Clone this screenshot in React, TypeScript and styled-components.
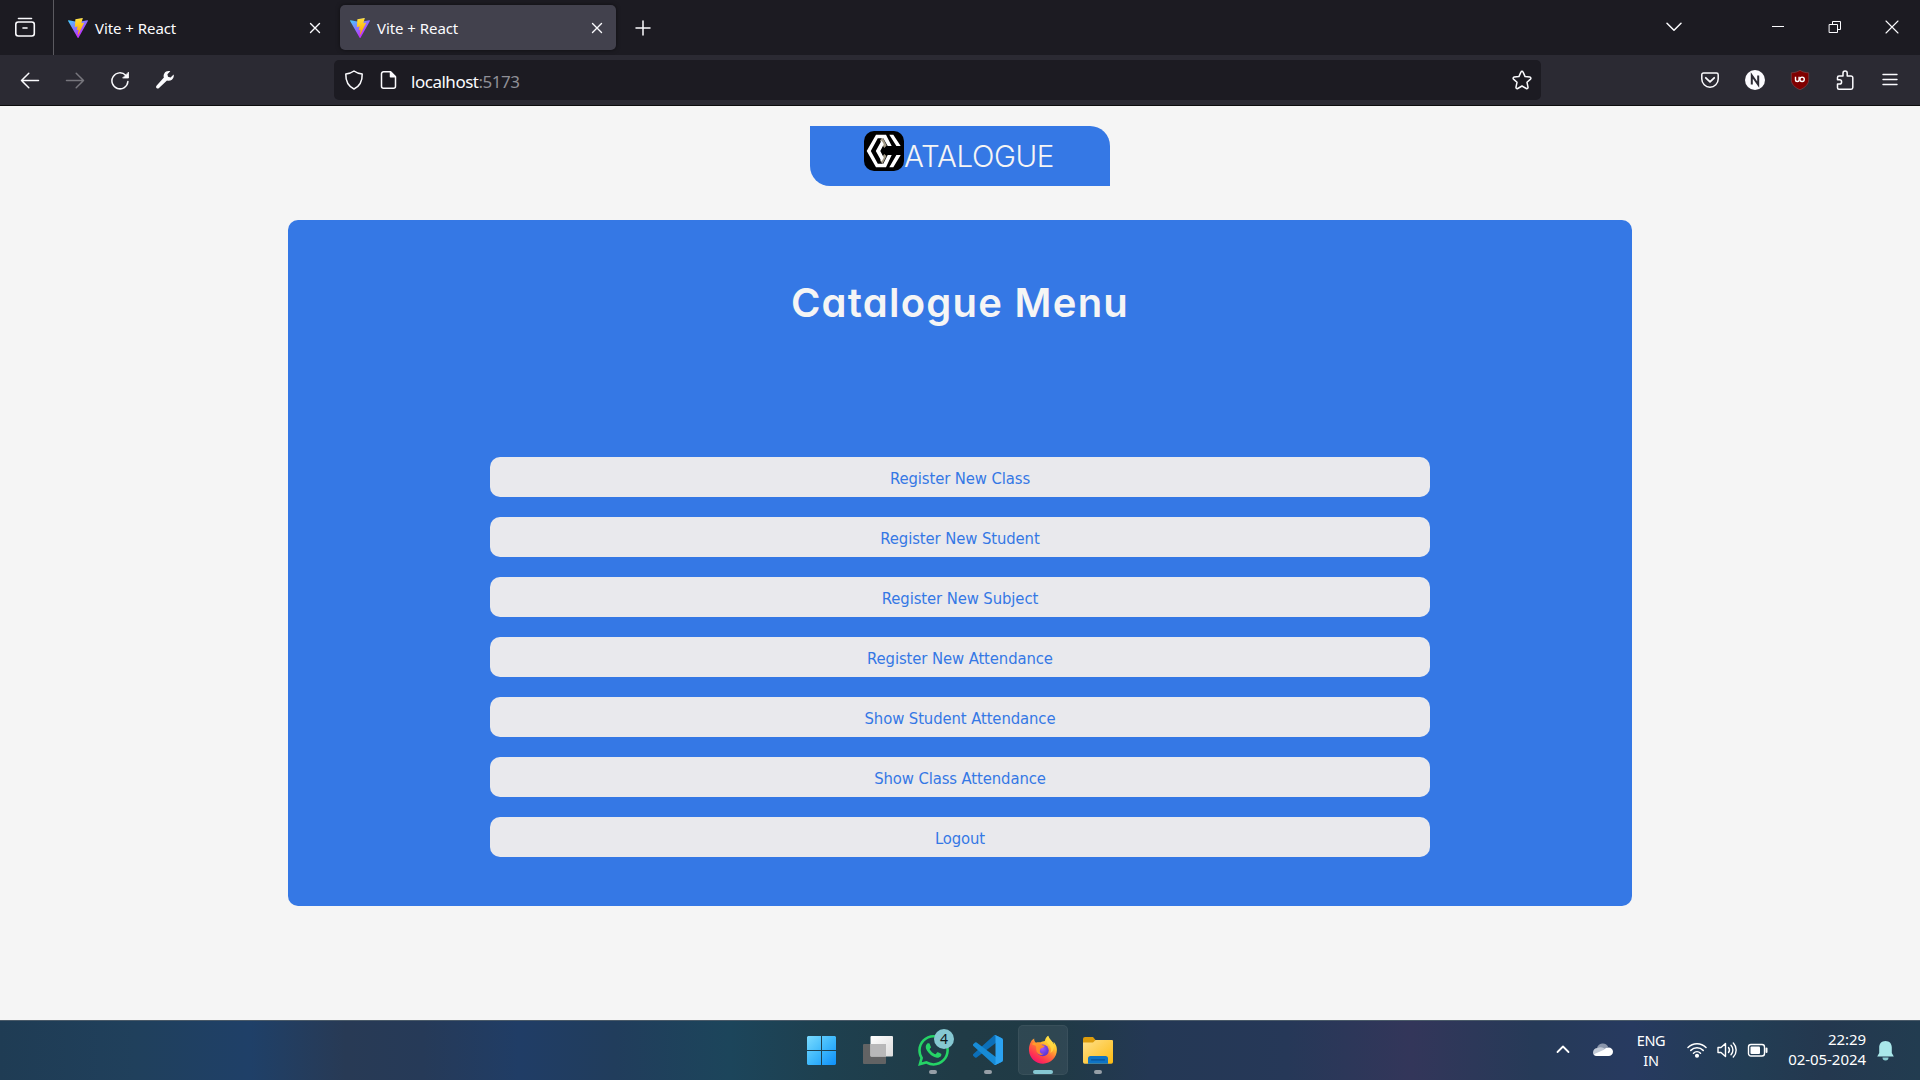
import React from 'react';
import styled, { createGlobalStyle } from 'styled-components';

const chromeFont = `'Noto Sans', 'Open Sans', sans-serif`;

const GlobalStyle = createGlobalStyle`
  * { box-sizing: border-box; }
  html, body { margin: 0; padding: 0; background: #f5f5f5; }
  svg { display: block; flex: none; }
`;

const Screen = styled.div`
  display: flex;
  flex-direction: column;
  width: 1920px;
  height: 1080px;
  overflow: hidden;
  font-family: ${chromeFont};
  color: #fbfbfe;
`;

/* ---------- browser chrome ---------- */

const TabStrip = styled.div`
  display: flex;
  height: 55px;
  background: #1c1b22;
  flex: none;
`;

const SidebarToggle = styled.div`
  width: 54px;
  padding: 17px 0 0 14px;
  border-right: 1px solid #5b5a60;
`;

const Tab = styled.div<{ $active?: boolean }>`
  display: flex;
  align-items: center;
  width: 276px;
  height: 45px;
  margin: 5px ${(p) => (p.$active ? 0 : 3)}px 0 ${(p) => (p.$active ? 3 : 4)}px;
  padding: 0 13px 0 10px;
  border-radius: 5px;
  background: ${(p) => (p.$active ? '#42414d' : 'transparent')};
  box-shadow: ${(p) => (p.$active ? '0 0 4px rgba(0,0,0,.5)' : 'none')};
`;

const Favicon = styled.div`
  width: 20px;
  height: 20px;
`;

const TabTitle = styled.span`
  flex: 1;
  margin-left: 7px;
  font-size: 15px;
  line-height: 20px;
  letter-spacing: -0.06px;
  padding-top: 1px;
`;

const NewTab = styled.div`
  padding: 20px 0 0 19px;
`;

const WindowControls = styled.div`
  display: flex;
  align-items: flex-start;
  margin-left: auto;
  padding: 20px 21px 0 0;
`;

const ControlSlot = styled.div<{ $gap: number }>`
  margin-right: ${(p) => p.$gap}px;
`;

const Toolbar = styled.div`
  display: flex;
  align-items: center;
  height: 51px;
  padding: 0 20px 0;
  background: #2b2a33;
  border-bottom: 1px solid #0c0c0d;
  flex: none;
`;

const NavButtons = styled.div`
  display: flex;
  gap: 25px;
  width: 314px;
`;

const UrlBar = styled.div`
  display: flex;
  align-items: center;
  width: 1207px;
  height: 40px;
  padding: 0 9px 0 10px;
  border-radius: 5px;
  background: #1c1b22;
`;

const PageInfo = styled.div`
  margin-left: 15px;
`;

const UrlText = styled.span`
  flex: 1;
  margin-left: 12px;
  font-size: 17px;
  line-height: 24px;
  padding-top: 3px;
  letter-spacing: -0.48px;
`;

const Port = styled.span`
  color: #8f8f96;
`;

const Extensions = styled.div`
  display: flex;
  gap: 25px;
  margin-left: auto;
`;

/* ---------- page ---------- */

const Page = styled.main`
  display: flex;
  flex-direction: column;
  align-items: center;
  flex: 1;
  padding-top: 20px;
  background: #f5f5f5;
`;

const Brand = styled.header`
  display: flex;
  width: 300px;
  height: 60px;
  padding: 5px 0 0 54px;
  border-radius: 0 20px 0 20px;
  background: #3578e5;
  color: #f5f5f5;
`;

const BrandName = styled.span`
  font-family: Inter, sans-serif;
  font-weight: 350;
  font-size: 29.5px;
  line-height: 40px;
  letter-spacing: -0.35px;
  margin: 5px 0 0 0;
  white-space: nowrap;
`;

const Panel = styled.section`
  display: flex;
  flex-direction: column;
  align-items: center;
  width: 1344px;
  height: 686px;
  margin-top: 34px;
  border-radius: 10px;
  background: #3578e5;
`;

const Title = styled.h1`
  margin: 59px 0 0;
  height: 178px;
  font-family: Inter, sans-serif;
  font-feature-settings: 'cv11';
  font-weight: 600;
  font-size: 40px;
  line-height: 48px;
  letter-spacing: 1.25px;
  color: #f5f5f5;
  white-space: nowrap;
`;

const Menu = styled.nav`
  display: flex;
  flex-direction: column;
  gap: 20px;
  width: 70%;
`;

const MenuButton = styled.button`
  height: 40px;
  padding: 2px 0 0;
  border: none;
  border-radius: 10px;
  background: #e9e9ed;
  color: #3578e5;
  font-family: 'DejaVu Sans Condensed', 'DejaVu Sans', sans-serif;
  font-stretch: condensed;
  font-size: 16.5px;
  letter-spacing: -0.1px;
`;

/* ---------- taskbar ---------- */

const Taskbar = styled.footer`
  display: flex;
  height: 60px;
  border-top: 1px solid #4a5a68;
  background: linear-gradient(90deg, #1f3c54 0%, #20405c 7%, #1f4068 13%, #283a55 18%, #263a58 22%, #203d66 27%, #213d5c 32%, #1c455b 38%, #1e404f 43%, #203b46 50%, #203a45 55%, #243855 60%, #263858 67%, #33365a 73.5%, #263a58 80%, #273a60 85%, #223d54 91%, #24384f 95%, #223c50 100%);
  flex: none;
`;

const Apps = styled.div`
  display: flex;
  gap: 5px;
  margin-left: 798px;
  padding-top: 4px;
`;

const AppSlot = styled.div<{ $active?: boolean }>`
  position: relative;
  display: flex;
  flex-direction: column;
  align-items: center;
  width: 50px;
  height: 50px;
  padding-top: 10px;
  border-radius: 5px;
  background: ${(p) => (p.$active ? 'rgba(255,255,255,.07)' : 'transparent')};
  box-shadow: ${(p) => (p.$active ? 'inset 0 0 0 1px rgba(255,255,255,.05)' : 'none')};
`;

const RunMark = styled.i<{ $active?: boolean }>`
  width: ${(p) => (p.$active ? 20 : 8)}px;
  height: 4px;
  margin-top: auto;
  margin-bottom: 1px;
  border-radius: 2px;
  background: ${(p) => (p.$active ? '#86c8d2' : '#969fa7')};
`;

const Badge = styled.span`
  position: absolute;
  left: 26px;
  top: 4px;
  width: 20px;
  height: 20px;
  border-radius: 50%;
  background: #86c8d2;
  color: #10181c;
  font-size: 14px;
  line-height: 20px;
  text-align: center;
`;

const Tray = styled.div`
  display: flex;
  align-items: flex-start;
  margin-left: auto;
  padding: 9px 26px 0 0;
  font-size: 14.5px;
  line-height: 20px;
  color: #fff;
`;

const TrayIcon = styled.div<{ $gap: number }>`
  margin: 10px ${(p) => p.$gap}px 0 0;
`;

const Language = styled.div`
  width: 30px;
  margin-right: 21px;
  display: flex;
  flex-direction: column;
  align-items: center;
  letter-spacing: -0.3px;
`;

const Clock = styled.div`
  width: 79px;
  margin: -1px 11px 0 0;
  text-align: right;
  white-space: nowrap;
  font-size: 15px;
  letter-spacing: -0.05px;
`;

/* ---------- icons ---------- */

type StrokeProps = { w: number; h?: number; s?: number; color?: string; children: React.ReactNode };
const Stroke = ({ w, h = w, s = 1.5, color = '#fbfbfe', children }: StrokeProps) => (
  <svg width={w} height={h} viewBox={`0 0 ${w} ${h}`} fill="none" stroke={color} strokeWidth={s} strokeLinecap="round" strokeLinejoin="round">
    {children}
  </svg>
);

const ViteIcon = ({ id }: { id: string }) => (
  <svg width="20" height="20" viewBox="0 0 256 257">
    <defs>
      <linearGradient id={`${id}a`} x1="0" x2=".58" y1="0" y2=".8"><stop stopColor="#41d1ff" /><stop offset="1" stopColor="#bd34fe" /></linearGradient>
      <linearGradient id={`${id}b`} x1=".43" x2=".5" y1=".02" y2=".9"><stop stopColor="#ffea83" /><stop offset=".08" stopColor="#ffdd35" /><stop offset="1" stopColor="#ffa800" /></linearGradient>
    </defs>
    <path fill={`url(#${id}a)`} d="M255.153 37.938L134.897 252.976c-2.483 4.44-8.862 4.466-11.382.048L.875 37.958c-2.746-4.814 1.371-10.646 6.827-9.67l120.385 21.517a6.537 6.537 0 0 0 2.322-.004l117.867-21.483c5.438-.991 9.574 4.796 6.877 9.62Z" />
    <path fill={`url(#${id}b)`} d="M185.432.063L96.44 17.501a3.268 3.268 0 0 0-2.634 3.014l-5.474 92.456a3.268 3.268 0 0 0 3.997 3.378l24.777-5.718c2.318-.535 4.413 1.507 3.936 3.838l-7.361 36.047c-.495 2.426 1.782 4.5 4.151 3.78l15.304-4.649c2.372-.72 4.652 1.36 4.15 3.788l-11.698 56.621c-.732 3.542 3.979 5.473 5.943 2.437l1.313-2.028l72.516-144.72c1.215-2.423-.88-5.186-3.54-4.672l-25.505 4.922c-2.396.462-4.435-1.77-3.759-4.114l16.646-57.705c.677-2.35-1.37-4.583-3.769-4.113Z" />
  </svg>
);

const CloseIcon = () => <Stroke w={12} s={1.4}><path d="M1.500 1.500l9 9m0-9l-9 9" /></Stroke>;

const BrandLogo = () => (
  <svg width="40" height="40" viewBox="0 0 40 40">
    <rect width="40" height="40" rx="10" fill="#000" />
    <path fill="#a39b88" d="M16 9.500L18.500 6l4.200 8.500-2.500 2.500zM16 29.500l2.500 3.500 4-8-2.300-2z" />
    <g fill="#fff">
      <path d="M12 3.700h10L27.700 15h-4L19.300 7.200h-5.500L6.800 20l7 12.800h5.500L23.700 24h4L22 36.300H12L2.700 20z" />
      <path d="M25.300 3.700h4L36.700 15h-4.300zM36.700 24h-4.300l-7.100 12.300h4z" />
      <path d="M11.800 20l5.800-10.500 2.200 3.800L16.300 20l3.500 6.700-2.200 3.800z" />
    </g>
  </svg>
);

const WindowsIcon = () => (
  <svg width="32" height="30" viewBox="0.5 -0.5 32 30">
    <defs><linearGradient id="win" x1="0" y1="0" x2="30" y2="30" gradientUnits="userSpaceOnUse"><stop stopColor="#7cdcff" /><stop offset=".5" stopColor="#3fb9fb" /><stop offset="1" stopColor="#0c8efa" /></linearGradient></defs>
    <path fill="url(#win)" d="M1.500.500H14.500V14.500H.500V1.500zM15.500.500H28.500l1 1V14.500H15.500zM.500 15.500H14.500V29.500H1.500l-1-1zM15.500 15.500H29.500V28.500l-1 1H15.500z" />
  </svg>
);

const TaskViewIcon = () => (
  <svg width="30" height="30" viewBox="0 0 30 30">
    <defs><linearGradient id="tv" x1="0" y1="0" x2="1" y2="1"><stop stopColor="#fff" /><stop offset="1" stopColor="#dcdcdc" /></linearGradient></defs>
    <rect x="0" y="9" width="23" height="20" rx="1" fill="#626364" />
    <rect x="7.500" y="1" width="22.500" height="20.500" rx="1" fill="url(#tv)" />
    <path d="M7.500 9H23V21.500H7.500z" fill="#b8b8b9" />
  </svg>
);

const WhatsAppIcon = () => (
  <svg width="31" height="31" viewBox="0 0 24 24" fill="#25d366">
    <path d="M17.472 14.382c-.297-.149-1.758-.867-2.030-.967-.273-.099-.471-.148-.670.150-.197.297-.767.966-.940 1.164-.173.199-.347.223-.644.075-.297-.150-1.255-.463-2.390-1.475-.883-.788-1.480-1.761-1.653-2.059-.173-.297-.018-.458.130-.606.134-.133.298-.347.446-.520.149-.174.198-.298.298-.497.099-.198.050-.371-.025-.520-.075-.149-.669-1.612-.916-2.207-.242-.579-.487-.500-.669-.510-.173-.008-.371-.010-.570-.010-.198 0-.520.074-.792.372-.272.297-1.040 1.016-1.040 2.479 0 1.462 1.065 2.875 1.213 3.074.149.198 2.096 3.200 5.077 4.487.709.306 1.262.489 1.694.625.712.227 1.360.195 1.871.118.571-.085 1.758-.719 2.006-1.413.248-.694.248-1.289.173-1.413-.074-.124-.272-.198-.570-.347m-5.421 7.403h-.004a9.870 9.870 0 01-5.031-1.378l-.361-.214-3.741.982.998-3.648-.235-.374a9.860 9.860 0 01-1.510-5.260c.001-5.450 4.436-9.884 9.888-9.884 2.640 0 5.122 1.030 6.988 2.898a9.825 9.825 0 012.893 6.994c-.003 5.450-4.437 9.884-9.885 9.884m8.413-18.297A11.815 11.815 0 0012.050 0C5.495 0 .160 5.335.157 11.892c0 2.096.547 4.142 1.588 5.945L.057 24l6.305-1.654a11.882 11.882 0 005.683 1.448h.005c6.554 0 11.890-5.335 11.893-11.893a11.821 11.821 0 00-3.480-8.413z" />
  </svg>
);

const CodeIcon = () => (
  <svg width="30" height="30" viewBox="0 0 100 100">
    <path fill="#0c6fb8" d="M96.500 10.800L75.900.900a6.200 6.200 0 0 0-7.100 1.200L1.300 63.600a4.200 4.200 0 0 0 0 6.200l5.500 5a4.200 4.200 0 0 0 5.300.200L93.400 13.400c2.700-2.100 6.600-.100 6.600 3.300v-.200c0-2.400-1.400-4.600-3.500-5.700z" />
    <path fill="#178bd6" d="M96.500 89.200l-20.600 9.900a6.200 6.200 0 0 1-7.100-1.200L1.300 36.400a4.200 4.200 0 0 1 0-6.200l5.500-5a4.200 4.200 0 0 1 5.300-.200l81.300 61.600c2.700 2.100 6.600.100 6.600-3.300v.200c0 2.400-1.400 4.600-3.500 5.700z" />
    <path fill="#2ba3f2" d="M75.900 99.100a6.200 6.200 0 0 1-7.100-1.200c2.300 2.300 6.200.700 6.200-2.600V4.700c0-3.300-3.900-4.900-6.200-2.600a6.200 6.200 0 0 1 7.100-1.200l20.600 9.900c2.100 1 3.500 3.200 3.500 5.600v67.200c0 2.400-1.400 4.600-3.500 5.600z" />
  </svg>
);

const FirefoxIcon = () => (
  <svg width="30" height="30" viewBox="0 0 30 30">
    <defs>
      <linearGradient id="ffx" x1=".85" y1=".05" x2=".25" y2=".95"><stop stopColor="#fff44f" /><stop offset=".3" stopColor="#ffc22e" /><stop offset=".55" stopColor="#ff7139" /><stop offset=".8" stopColor="#ff3750" /><stop offset="1" stopColor="#f5156c" /></linearGradient>
      <radialGradient id="ffg" cx=".45" cy=".35" r=".7"><stop stopColor="#a455ff" /><stop offset=".6" stopColor="#6b3fe0" /><stop offset="1" stopColor="#5a30c8" /></radialGradient>
      <linearGradient id="fft" x1="0" y1="0" x2="1" y2="1"><stop stopColor="#ffa12c" /><stop offset="1" stopColor="#ff7a2b" /></linearGradient>
    </defs>
    <path fill="url(#ffx)" d="M27.600 9.800c-.5-1.300-1.400-2.600-2.300-3 .5 1 .8 2 .9 2.800-1.400-3.200-4.500-4.800-6-8.900-2.400 1.300-3.200 4-3.400 5.400-1.400.100-3 .500-4 1.200-1.900-.200-3.500-.100-4.800.4C6.800 7 6 5.300 6.200 3.600 4.600 4.400 3.400 5.800 2.700 7.200c-.3.500-.5 1-.7 1.600C1.200 10.900.8 13.300 1 15.700 1.500 23 7.500 28.700 15 28.700c7.700 0 13.900-6.200 13.900-13.900 0-1.800-.5-3.700-1.300-5z" />
    <circle cx="14.800" cy="15.400" r="5.900" fill="url(#ffg)" />
    <path fill="url(#fft)" d="M3.500 9c2.600-1.500 5.500-1.700 8.500-.3 1.200.6 2.100 1.800 4.800 2-.2 1.300-1.700 2-3 2.300-1.300.4-1.700 1.400-1.900 2.400-.5 2 1.500 3.800 4 3.400-3 2.500-7.300.4-7.600-3.800-.1-2 .2-3.300-.6-4.200-1.200-.8-2.700-.9-4.200-1.800z" />
    <path fill="#ffdb45" d="M19.900 1c-2 2.800-2 6 .8 8.400 2.200 2 3 5.200 1.700 8.600 3-1.500 4-5.700 3.400-8.300-1.300-3.300-4.400-4.900-5.900-8.700z" opacity=".75" />
  </svg>
);

const FolderIcon = () => (
  <svg width="30" height="30" viewBox="0 0 30 30">
    <defs><linearGradient id="fld" x1="0" y1="0" x2="1" y2="1"><stop stopColor="#ffe08a" /><stop offset="1" stopColor="#fcba10" /></linearGradient></defs>
    <path fill="#dc9c0c" d="M0 4a2 2 0 0 1 2-2h8l2.500 3V10H0z" />
    <path fill="url(#fld)" d="M0 7.500h10L12.500 5H29a1 1 0 0 1 1 1v21a1.700 1.700 0 0 1-1.700 1.700H1.700A1.700 1.700 0 0 1 0 27z" />
    <path fill="#0f74c4" d="M5 28.700V23.500a2.500 2.500 0 0 1 2.500-2.500h15a2.500 2.500 0 0 1 2.500 2.500v5.200z" />
    <path d="M8.500 24.800h13" stroke="#07539a" strokeWidth="1.200" strokeLinecap="round" />
  </svg>
);

const menuItems = [
  'Register New Class',
  'Register New Student',
  'Register New Subject',
  'Register New Attendance',
  'Show Student Attendance',
  'Show Class Attendance',
  'Logout',
];

export default function App() {
  return (
    <Screen>
      <GlobalStyle />
      <TabStrip>
        <SidebarToggle>
          <Stroke w={22} s={1.600}><path d="M4.500 1.500h13" /><rect x="1.800" y="5" width="18.500" height="14" rx="2.500" /><path d="M9 11h4" /></Stroke>
        </SidebarToggle>
        <Tab>
          <Favicon><ViteIcon id="t1" /></Favicon>
          <TabTitle>Vite + React</TabTitle>
          <CloseIcon />
        </Tab>
        <Tab $active>
          <Favicon><ViteIcon id="t2" /></Favicon>
          <TabTitle>Vite + React</TabTitle>
          <CloseIcon />
        </Tab>
        <NewTab><Stroke w={16}><path d="M8 1v14M1 8h14" /></Stroke></NewTab>
        <WindowControls>
          <ControlSlot $gap={90}><Stroke w={16} h={14}><path d="M1 3.200l7 7 7-7" /></Stroke></ControlSlot>
          <ControlSlot $gap={44}><Stroke w={12} h={14} s={1}><path d="M.5 6.500h11" strokeLinecap="square" /></Stroke></ControlSlot>
          <ControlSlot $gap={43}><Stroke w={14} s={1}><path d="M1.500 4.500h8v8h-8zM4.500 4.500v-3h8v8h-3" /></Stroke></ControlSlot>
          <Stroke w={14} s={1.100}><path d="M1 1l12 12M13 1L1 13" /></Stroke>
        </WindowControls>
      </TabStrip>

      <Toolbar>
        <NavButtons>
          <Stroke w={20}><path d="M1.500 10.500h17M8.800 3.300L1.500 10.500l7.300 7.200" /></Stroke>
          <Stroke w={20} color="#77767d"><path d="M18.500 10.500h-17M11.200 3.300L18.500 10.500l-7.300 7.200" /></Stroke>
          <Stroke w={20}><path d="M17.900 11.500a8 8 0 1 1-2.200-6.200" /><path d="M18.500 2.500v5.500H13z" fill="#fbfbfe" strokeWidth=".8" /></Stroke>
          <svg width="20" height="20" viewBox="0 0 20 20"><path fill="#fbfbfe" d="M18.600 4.600l-3 2.800-2.600-.6-.6-2.600 2.900-2.900c-2.200-.7-4.800 0-6 2.100-.8 1.300-.9 2.800-.4 4.200L1.700 15.500c-.8.800-.8 1.800-.2 2.500.7.700 1.800.7 2.500 0l8-7.500c1.600.6 3.500.3 4.900-.8 1.600-1.300 2.300-3.300 1.700-5.100z" /></svg>
        </NavButtons>
        <UrlBar>
          <Stroke w={20}><path d="M10 1c2.500 2 5 2.600 8.200 3 .2 7-2 12-8.200 15C3.800 16 1.600 11 1.800 4 5 3.600 7.500 3 10 1z" /></Stroke>
          <PageInfo>
            <Stroke w={20}><path d="M4.500 1.800h7l5 5v9.400a2 2 0 0 1-2 2h-10a2 2 0 0 1-2-2V3.800a2 2 0 0 1 2-2z" /><path d="M11.500 2v4.800h4.800z" fill="#fbfbfe" /></Stroke>
          </PageInfo>
          <UrlText>localhost<Port>:5173</Port></UrlText>
          <Stroke w={20}><path d="M10 1.300c.5 0 .9.300 1.100.8l2 4.500 4.700.5c1.100.1 1.400 1.300.7 2l-3.500 3.200 1 4.900c.2 1-.8 1.800-1.700 1.300L10 16l-4.300 2.500c-.9.500-1.900-.3-1.700-1.300l1-4.900-3.500-3.200c-.7-.7-.4-1.900.7-2l4.700-.5 2-4.500c.2-.5.600-.8 1.100-.8z" /></Stroke>
        </UrlBar>
        <Extensions>
          <Stroke w={20}><path d="M3.500 3h13c1 0 1.700.7 1.700 1.700V9a8.200 8.200 0 0 1-16.400 0V4.700C1.800 3.700 2.500 3 3.500 3z" /><path d="M5.800 7.800L10 11.800l4.200-4" strokeWidth="1.800" /></Stroke>
          <svg width="20" height="20" viewBox="0 0 20 20"><circle cx="10" cy="10" r="10" fill="#fbfbfe" /><path d="M6.800 14.500v-9l6.400 9v-9" fill="none" stroke="#2b2a33" strokeWidth="2" /></svg>
          <svg width="20" height="20" viewBox="0 0 20 20"><path d="M10 .300c2.500 1.700 5 2.300 8.700 2.500v6.700c0 4.500-3 7.700-8.700 10.300C4.300 17.200 1.300 14 1.300 9.500V2.800C5 2.600 7.500 2 10 .300z" fill="#800000" stroke="#75484c" strokeWidth=".7" /><path d="M5.500 6.700v3c0 2.400 3.600 2.400 3.600 0V6.700" fill="none" stroke="#fff" strokeWidth="1.400" /><circle cx="12.100" cy="9.300" r="2.200" fill="none" stroke="#fff" strokeWidth="1.400" /></svg>
          <Stroke w={20}><path d="M4 6h4V3.200a2.100 2.100 0 0 1 4.200 0V6H16a1.800 1.800 0 0 1 1.800 1.800v9.700a1.700 1.700 0 0 1-1.700 1.700H4a1.500 1.500 0 0 1-1.500-1.500V14h2a2.100 2.100 0 0 0 0-4.200h-2V7.500A1.500 1.500 0 0 1 4 6z" /></Stroke>
          <Stroke w={20} s={1.400}><path d="M3 4.500h14M3 9.500h14M3 14.500h14" /></Stroke>
        </Extensions>
      </Toolbar>

      <Page>
        <Brand>
          <BrandLogo />
          <BrandName>ATALOGUE</BrandName>
        </Brand>
        <Panel>
          <Title>Catalogue Menu</Title>
          <Menu>
            {menuItems.map((label) => (
              <MenuButton key={label}>{label}</MenuButton>
            ))}
          </Menu>
        </Panel>
      </Page>

      <Taskbar>
        <Apps>
          <AppSlot><WindowsIcon /></AppSlot>
          <AppSlot><TaskViewIcon /></AppSlot>
          <AppSlot><WhatsAppIcon /><RunMark /><Badge>4</Badge></AppSlot>
          <AppSlot><CodeIcon /><RunMark /></AppSlot>
          <AppSlot $active><FirefoxIcon /><RunMark $active /></AppSlot>
          <AppSlot><FolderIcon /><RunMark /></AppSlot>
        </Apps>
        <Tray>
          <TrayIcon $gap={23}><Stroke w={14} h={18} s={1.800} color="#fff"><path d="M1.500 12L7 6.500l5.500 5.500" /></Stroke></TrayIcon>
          <TrayIcon $gap={23}>
            <svg width="20" height="20" viewBox="0 0 20 20">
              <path d="M4 8a6 6 0 0 1 11-1.500l-2 5-8 1z" fill="#8b96ab" />
              <path d="M4.500 8C2 8 0 10 0 12.500c0 1.700 1 3 2.500 3.500L13 10C11 7.500 7.500 6.500 4.500 8z" fill="#c3cad6" />
              <path d="M15.500 7.500c2.500 0 4.500 1.800 4.500 4.200 0 2.500-2 4.300-4.500 4.300h-11c-1.500 0-2.800-.6-3.600-1.800L11 9.800c1.200-1.500 2.800-2.300 4.500-2.300z" fill="#fff" />
            </svg>
          </TrayIcon>
          <Language><span>ENG</span><span>IN</span></Language>
          <TrayIcon $gap={10}>
            <Stroke w={20} s={1.500} color="#fff"><path d="M1 7.500a12.700 12.700 0 0 1 18 0M3.800 10.400a8.800 8.800 0 0 1 12.400 0M6.500 13.200a5 5 0 0 1 7 0" /><circle cx="10" cy="15.800" r="1.300" fill="#fff" /></Stroke>
          </TrayIcon>
          <TrayIcon $gap={10}>
            <Stroke w={20} s={1.400} color="#fff"><path d="M1 7.500h3L8.500 3.500v13L4 12.500H1z" /><path d="M11.500 7.500a4 4 0 0 1 0 5M14 5.200a7 7 0 0 1 0 9.600M16.300 3a10 10 0 0 1 0 14" /></Stroke>
          </TrayIcon>
          <TrayIcon $gap={18}>
            <Stroke w={22} h={20} s={1.400} color="#fff"><rect x="1.500" y="4.500" width="16" height="11.500" rx="2.500" /><rect x="3.500" y="6.500" width="9.500" height="7.500" rx="1" fill="#fff" stroke="none" /><path d="M19.500 8.500v3.500" strokeWidth="2" /></Stroke>
          </TrayIcon>
          <Clock>22:29<br />02-05-2024</Clock>
          <svg width="17" height="40" viewBox="0 0 17 40"><path d="M8.500 11c4 0 6.300 2.800 6.300 6.500V23l2 3.500H.2l2-3.500v-5.500C2.200 13.800 4.500 11 8.500 11z" fill="#a9e8ea" /><path d="M5.500 27.500h6a3 3 0 0 1-6 0z" fill="#8accd2" /></svg>
        </Tray>
      </Taskbar>
    </Screen>
  );
}
